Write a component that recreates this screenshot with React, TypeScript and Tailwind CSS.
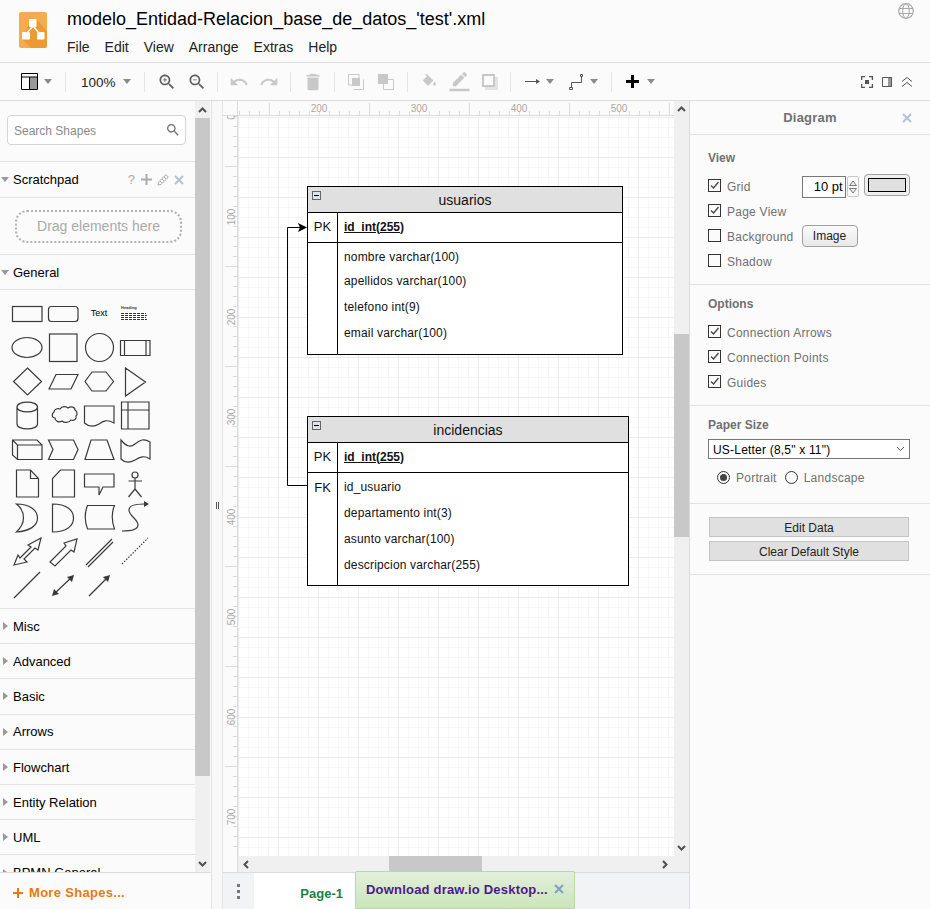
import React from 'react';

const font = "[font-family:'Liberation_Sans',Arial,sans-serif]";

const Caret = ({ className = '' }: { className?: string }) => (
  <svg width="8" height="5" viewBox="0 0 8 5" className={`shrink-0 ${className}`}>
    <path d="M0 0h8L4 5z" fill="#8a8a8a" />
  </svg>
);

const Sep = ({ className = '' }: { className?: string }) => <div className={`w-px h-[20px] bg-[#e4e5e8] shrink-0 ${className}`} />;

const Mat = ({ d, size = 20, fill = '#c8c8c8', className = '' }: { d: string; size?: number; fill?: string; className?: string }) => (
  <svg width={size} height={size} viewBox="0 0 24 24" className={`shrink-0 ${className}`}>
    <path d={d} fill={fill} />
  </svg>
);

const LENS = 'M15.5 14h-.79l-.28-.27C15.41 12.59 16 11.11 16 9.5 16 5.91 13.09 3 9.5 3S3 5.91 3 9.5 5.91 16 9.5 16c1.61 0 3.09-.59 4.23-1.57l.27.28v.79l5 4.99L20.49 19l-4.99-5zm-6 0C7.01 14 5 11.99 5 9.5S7.01 5 9.5 5 14 7.01 14 9.5 11.99 14 9.5 14z';

const Toolbar = () => (
  <div className="h-[38px] flex items-center border-b border-[#dadce0] shrink-0">
    <svg width="17" height="17" viewBox="0 0 17 17" className="ml-[21px] shrink-0">
      <path d="M9 4h7.5v12.5H9z" fill="#999" />
      <path d="M.5.5h16v16H.5zM.5 4h16M8.5 4v12.5" fill="none" stroke="#000" />
    </svg>
    <Caret className="ml-[6px]" />
    <Sep className="ml-[13px]" />
    <div className="ml-[15px] w-[35px] pt-[3px] text-[13.5px] text-[#222] whitespace-nowrap">100%</div>
    <Caret className="ml-[7px]" />
    <Sep className="ml-[13px]" />
    <Mat className="ml-[12px]" fill="#5f5f5f" d={LENS + 'M12 10h-2v2H9v-2H7V9h2V7h1v2h2v1z'} />
    <Mat className="ml-[10px]" fill="#5f5f5f" d={LENS + 'M7 9h5v1H7z'} />
    <Sep className="ml-[10px]" />
    <Mat className="ml-[11px]" d="M12.5 8c-2.65 0-5.05.99-6.9 2.6L2 7v9h9l-3.62-3.62c1.39-1.16 3.16-1.88 5.12-1.88 3.54 0 6.55 2.31 7.6 5.5l2.37-.78C21.08 11.03 17.15 8 12.5 8z" />
    <Mat className="ml-[10px]" d="M18.4 10.6C16.55 8.99 14.15 8 11.5 8c-4.65 0-8.58 3.03-9.96 7.22L3.9 16c1.05-3.19 4.05-5.5 7.6-5.5 1.95 0 3.73.72 5.12 1.88L13 16h9V7l-3.6 3.6z" />
    <Sep className="ml-[11px]" />
    <Mat className="ml-[11px]" size={22} d="M6 19c0 1.1.9 2 2 2h8c1.1 0 2-.9 2-2V7H6v12zM19 4h-3.5l-1-1h-5l-1 1H5v2h14V4z" />
    <Sep className="ml-[10px]" />
    <svg width="16" height="16" viewBox="0 0 16 16" className="ml-[13px] shrink-0">
      <path d="M4 11H.5V.5H11V4M5.500 15.500h10V5.500" fill="none" stroke="#c8c8c8" />
      <path d="M4 4h8v8H4z" fill="#c8c8c8" />
    </svg>
    <svg width="16" height="16" viewBox="0 0 16 16" className="ml-[14px] shrink-0">
      <path d="M0 0h10v10H0z" fill="#c8c8c8" />
      <path d="M5.500 5.500h10v10h-10z" fill="#fbfbfb" stroke="#c8c8c8" />
      <path d="M6 6h4v4H6z" fill="#c8c8c8" />
    </svg>
    <Sep className="ml-[13px]" />
    <svg width="17" height="18" viewBox="0 0 24 24" className="ml-[13px] shrink-0">
      <path fill="#c8c8c8" d="M16.56 8.94L7.620 0 6.210 1.410l2.380 2.380-5.150 5.150c-.59.59-.59 1.540 0 2.120l5.500 5.500c.29.29.68.44 1.060.44s.77-.15 1.060-.44l5.500-5.500c.59-.58.59-1.530 0-2.120zM19 11.500s-2 2.170-2 3.500c0 1.100.9 2 2 2s2-.9 2-2c0-1.330-2-3.500-2-3.500z" />
    </svg>
    <svg width="21" height="20" viewBox="0 0 24 24" className="ml-[11px] shrink-0">
      <path fill="#c8c8c8" d="M17.750 7L14 3.250l-10 10V17h3.750l10-10zm2.960-2.960c.39-.39.39-1.020 0-1.410L18.370.29a.996.996 0 0 0-1.410 0L15 2.250 18.750 6l1.960-1.960zM0 20h24v3H0z" />
    </svg>
    <svg width="16" height="16" viewBox="0 0 16 16" className="ml-[12px] shrink-0">
      <path d="M3 3h13v13H3z" fill="#e3e3e3" />
      <path d="M1 1h11v11H1z" fill="#fbfbfb" stroke="#c8c8c8" strokeWidth="2" />
    </svg>
    <Sep className="ml-[12px]" />
    <svg width="15" height="7" viewBox="0 0 15 7" className="ml-[14px] shrink-0">
      <path d="M0 3.500h12" stroke="#555" />
      <path d="M11 1l4 2.500L11 6z" fill="#555" />
    </svg>
    <Caret className="ml-[6px]" />
    <svg width="15" height="16" viewBox="0 0 15 16" className="ml-[15px] shrink-0">
      <path d="M2.500 13.500V8.500h10V2.500" fill="none" stroke="#555" />
      <path d="M.5 13.500h3v2h-3zM11.500.5h2v2h-2z" fill="#fff" stroke="#555" />
    </svg>
    <Caret className="ml-[6px]" />
    <Sep className="ml-[13px]" />
    <svg width="13" height="13" viewBox="0 0 13 13" className="ml-[14px] shrink-0">
      <path d="M5 0h3v5h5v3H8v5H5V8H0V5h5z" fill="#000" />
    </svg>
    <Caret className="ml-[8px]" />
    <svg width="12" height="12" viewBox="0 0 12 12" className="ml-auto shrink-0">
      <path d="M.5 4V.5H4M8 .5h3.500V4M.5 8v3.500H4M8 11.500h3.500V8" fill="none" stroke="#555" strokeWidth="1.500" />
      <path d="M4 4h4v4H4z" fill="#555" />
    </svg>
    <svg width="10" height="10" viewBox="0 0 10 10" className="ml-[9px] shrink-0">
      <path d="M6 0h4v10H6z" fill="#999" />
      <path d="M.5.5h9v9h-9z" fill="none" stroke="#555" />
    </svg>
    <svg width="10" height="10" viewBox="0 0 10 10" className="ml-[10px] mr-[18px] shrink-0">
      <path d="M0 4.500l5-4 5 4M0 9.500l5-4 5 4" fill="none" stroke="#555" />
    </svg>
  </div>
);

const Tri = () => (
  <svg width="8" height="5" viewBox="0 0 8 5" className="shrink-0 mr-[4px]">
    <path d="M0 0h8L4 5z" fill="#999" />
  </svg>
);

const TriRight = () => (
  <svg width="5" height="8" viewBox="0 0 5 8" className="shrink-0 mx-[3px] mr-[5px]">
    <path d="M0 0l5 4-5 4z" fill="#999" />
  </svg>
);

const Palette = () => (
  <svg width="170" height="318" viewBox="0 290 170 318" className="block" fill="none" stroke="#3a3a3a" strokeWidth="1.200">
    <rect x="12.500" y="306.500" width="29.500" height="15" />
    <rect x="48.500" y="306.500" width="29.500" height="15" rx="3" />
    <text x="99" y="316" fontSize="9" fill="#000" stroke="none" textAnchor="middle" fontFamily="Liberation Sans">Text</text>
    <text x="121" y="309" fontSize="4" fontWeight="bold" fill="#333" stroke="none" fontFamily="Liberation Sans">Heading</text>
    <path d="M121 313.500h25M121 315.500h26M121 317.500h25M121 319.500h26" stroke="#333" strokeWidth="1" strokeDasharray="3 1" />
    <ellipse cx="27" cy="347.500" rx="15" ry="10" />
    <rect x="49.500" y="334" width="27.500" height="27.500" />
    <circle cx="99.500" cy="347.500" r="14" />
    <path d="M120.500 340.500h29.500v15h-29.500zM124.500 340.500v15M146 340.500v15" />
    <path d="M27.500 368l14 13.500-14 13.500-14-13.500zM49 389l7-14.500h22l-7 14.500zM85 381.500l7-9.500h14l7.500 9.500-7.500 9.500H92zM125.500 368l20 14-20 14z" />
    <path d="M17 407v17c0 6.500 20.500 6.500 20.500 0v-17c0-6.500-20.500-6.500-20.500 0zM17 407c0 6.500 20.500 6.500 20.500 0" />
    <path d="M54 412c0-3 4-4 6-3 2-3 6-3 8-1 3-2 7-1 7 2 2 1 3 5 1 6 1 3-2 5-5 4-2 3-7 3-9 1-3 2-7 0-7-3-3 0-4-4-1-6z" />
    <path d="M84.500 406h29.500v17c-7-4-11-2-15 1-5 3-10 3-14.500-1z" />
    <path d="M121.500 402h27.500v27h-27.500zM128 402v27M121.500 410h27.500" />
    <g transform="translate(0 3)">
      <path d="M12.500 437h24.500l5 5v14.500H17.500l-5-4.500zM12.500 437l5 5v14.500M17.500 442H42" />
      <path d="M48.500 437h25l4.500 9.500-4.500 10h-25l4.500-10z" />
      <path d="M91 437h16l7 19.500H85z" />
      <path d="M121 437c5 6 9 8 14 4s9-6 15-2v17c-6-4-10-2-15 1s-10 3-14-1z" />
    </g>
    <path d="M16.500 470h14l8 8.500V497h-22zM30.500 470v8.500h8" />
    <path d="M60.500 470h14v27h-22v-18.500z" />
    <path d="M84.500 474h29.500v13h-11l-4 8v-8H84.500z" />
    <circle cx="135" cy="475" r="3" />
    <path d="M135 478v11M128.500 481h13.500M135 489l-6.500 8M135 489l6.500 8" />
    <path d="M16.500 504c13 0 21 6 21 14s-8 13-21 14c5-5 7-9 7-14s-2-10-7-14z" />
    <path d="M52.500 504c14 0 21 6 21 14s-7 14-21 14z" />
    <path d="M87.500 505.500h27c-3 7-3 15 0 23.500h-27c-3-8-3-16 0-23.500z" />
    <path d="M122 531c9 0 16-1 16-6 0-6-9-9-9-15 0-4 5-6 15-6" />
    <path d="M144 501l5 3-5 3z" fill="#3a3a3a" stroke="none" />
    <path d="M14 565l4-10 2 3 11-11-3-2 13-7-3 12-3-2-11 11 3 3z" />
    <path d="M50 562l16-16-2-3 13-4-3 13-3-2-16 16z" />
    <path d="M86 565l26-26M88 567l25-25" />
    <path d="M122 564l26-26" strokeDasharray="1.500 1.500" />
    <path d="M14 598l26-26" />
    <path d="M54 594l19-18" />
    <path d="M52 596l7-2-5-5zM74 575l-7 2 5 5z" fill="#3a3a3a" stroke="none" />
    <path d="M89 596l19-19" />
    <path d="M110 575l-7 2 5 5z" fill="#3a3a3a" stroke="none" />
  </svg>
);

const sections = ['Misc', 'Advanced', 'Basic', 'Arrows', 'Flowchart', 'Entity Relation', 'UML'];

const Sidebar = () => (
  <div className="w-[212px] shrink-0 flex flex-col border-r border-[#e2e2e2]">
    <div className="flex-1 flex min-h-0">
      <div className="w-[195px] shrink-0 overflow-hidden flex flex-col">
        <div className="h-[61px] shrink-0 border-b border-[#e2e2e2] pl-[7px] pt-[14px]">
          <div className="w-[179px] h-[30px] rounded-[4px] border border-[#d4d4d4] bg-white flex items-center pl-[6px] pr-[4px]">
            <span className="text-[12px] pt-px text-[#8a8a8a]">Search Shapes</span>
            <svg width="16" height="16" viewBox="0 0 24 24" className="ml-auto">
              <path d={LENS} fill="#707070" />
            </svg>
          </div>
        </div>
        <div className="h-[36px] shrink-0 border-b border-[#e2e2e2] flex items-center pl-px pr-[11px]">
          <Tri />
          <span className="text-[13px] text-black">Scratchpad</span>
          <span className="ml-auto text-[13px] text-[#aaa]">?</span>
          <svg width="11" height="11" viewBox="0 0 11 11" className="ml-[6px]">
            <path d="M4.500 0h2v4.500H11v2H6.500V11h-2V6.500H0v-2h4.500z" fill="#aaa" />
          </svg>
          <svg width="12" height="12" viewBox="0 0 12 12" className="ml-[5px]">
            <path d="M1 11l.5-3L9 .7l2.300 2.300L4 10.500z" fill="none" stroke="#aaa" />
            <path d="M3 7l2 2M5 5l2 2M7 3l2 2" stroke="#aaa" />
          </svg>
          <svg width="10" height="10" viewBox="0 0 10 10" className="ml-[5px]">
            <path d="M1 1l8 8M9 1l-8 8" stroke="#b4c2d6" strokeWidth="2" />
          </svg>
        </div>
        <div className="h-[57px] shrink-0 border-b border-[#e2e2e2] flex items-center justify-center pl-[2px]">
          <div className="w-[167px] h-[33px] rounded-[12px] border-2 border-dotted border-[#b0b0b0] flex items-center justify-center text-[14px] text-[#aaaaaa]">
            Drag elements here
          </div>
        </div>
        <div className="h-[35px] shrink-0 border-b border-[#e2e2e2] flex items-center pl-px">
          <Tri />
          <span className="text-[13px] pt-px text-black">General</span>
        </div>
        <div className="h-[319px] shrink-0 border-b border-[#e2e2e2]">
          <Palette />
        </div>
        {sections.map((name) => (
          <div key={name} className="h-[35.2px] shrink-0 border-b border-[#e2e2e2] flex items-center">
            <TriRight />
            <span className="text-[13px] pt-px text-black whitespace-nowrap">{name}</span>
          </div>
        ))}
        <div className="h-[35px] shrink-0 flex items-center">
          <TriRight />
          <span className="text-[13px] text-black whitespace-nowrap">BPMN General</span>
        </div>
      </div>
      <div className="w-[15px] shrink-0 bg-[#f0f0f0] flex flex-col">
        <div className="h-[17px] shrink-0 flex items-center justify-center">
          <svg width="9" height="6" viewBox="0 0 9 6"><path d="M1 5l3.500-3.500L8 5" fill="none" stroke="#505050" strokeWidth="2" /></svg>
        </div>
        <div className="h-[658px] bg-[#c8c8c8] shrink-0" />
        <div className="mt-auto h-[17px] flex items-center justify-center">
          <svg width="9" height="6" viewBox="0 0 9 6"><path d="M1 1l3.500 3.500L8 1" fill="none" stroke="#505050" strokeWidth="2" /></svg>
        </div>
      </div>
    </div>
    <div className="h-[37px] shrink-0 border-t border-[#dadce0] flex items-center pl-[13px] pt-[4px]">
      <svg width="10" height="10" viewBox="0 0 10 10" className="mr-[6px]">
        <path d="M4 0h2v4h4v2H6v4H4V6H0V4h4z" fill="#e87a0c" />
      </svg>
      <span className="text-[13px] font-bold text-[#e87a0c] tracking-[0.3px]">More Shapes...</span>
    </div>
  </div>
);

const HRuler = () => {
  const ticks = Array.from({ length: 44 }, (_, i) => i * 10 + 1.5);
  return (
    <svg width="436" height="15" className="block flex-1">
      {ticks.map((x) => (
        <path key={x} d={`M${x} ${(x - 31.5) % 100 === 0 ? 2 : 10}V15`} stroke="#dcdcdc" />
      ))}
      {[200, 300, 400, 500].map((v, i) => (
        <text key={v} x={81 + i * 100} y="11" fontSize="10" fill="#a8a8a8" textAnchor="middle" fontFamily="Liberation Sans">{v}</text>
      ))}
    </svg>
  );
};

const VRuler = () => {
  const ticks = Array.from({ length: 76 }, (_, i) => i * 10 + 0.5);
  return (
    <svg width="15" height="757" className="block shrink-0 bg-[#fbfbfb]">
      <path d="M14.500 0V757" stroke="#dcdcdc" />
      {ticks.map((y) => (
        <path key={y} d={`M${(y - 50.5) % 100 === 0 ? 2 : 10} ${y}H15`} stroke="#dcdcdc" />
      ))}
      {[0, 100, 200, 300, 400, 500, 600, 700].map((v, i) => (
        <text key={v} transform={`translate(12 ${1 + i * 100}) rotate(-90)`} fontSize="10" fill="#a8a8a8" textAnchor="middle" fontFamily="Liberation Sans">{v}</text>
      ))}
    </svg>
  );
};

const Collapse = () => (
  <div className="absolute left-[4px] top-[4px] w-[9px] h-[9px] bg-[#dde3ea] border border-[#666] flex items-center justify-center">
    <div className="w-[5px] h-px bg-black" />
  </div>
);

type EntityProps = {
  title: string;
  className: string;
  fk?: string;
  rows: string[];
  firstRow: string;
};

const Entity = ({ title, className, fk, rows, firstRow }: EntityProps) => (
  <div className={`absolute border border-black bg-white flex flex-col text-[12px] tracking-[0.17px] text-[#111] ${className}`}>
    <div className="relative h-[26px] pt-[2px] shrink-0 bg-[#e0e0e0] border-b border-black flex items-center justify-center text-[14px] tracking-normal">
      <Collapse />
      {title}
    </div>
    <div className="h-[30px] pb-[2px] shrink-0 border-b border-black flex">
      <div className="w-[30px] border-r border-black -mb-[2px] pb-[2px] flex items-center justify-center text-[13px] tracking-normal">PK</div>
      <div className="pl-[6px] flex items-center font-bold underline tracking-normal">id_int(255)</div>
    </div>
    <div className="flex-1 flex">
      <div className="w-[30px] shrink-0 border-r border-black">
        {fk && <div className="h-[29px] flex items-center justify-center text-[13px] tracking-normal">{fk}</div>}
      </div>
      <div className="flex-1 pl-[6px] pt-[1px]">
        {rows.map((r, i) => (
          <div key={r} className={`flex items-center ${i === 0 ? firstRow : 'h-[26px]'}`}>{r}</div>
        ))}
      </div>
    </div>
  </div>
);

const Canvas = () => (
  <div className="flex-1 flex min-w-0">
    <div className="w-[11px] shrink-0 bg-[#f8f8f8] border-r border-[#e6e6e6] flex items-center justify-center pl-px">
      <div className="w-[3px] h-[7px] border-x border-[#555]" />
    </div>
    <div className="flex-1 flex flex-col min-w-0">
      <div className="flex-1 flex min-h-0">
        <div className="flex-1 flex flex-col min-w-0">
          <div className="h-[15px] shrink-0 flex bg-[#fbfbfb] border-b border-[#dcdcdc]">
            <div className="w-[15px] shrink-0 border-r border-[#dcdcdc]" />
            <HRuler />
          </div>
          <div className="flex-1 flex min-h-0">
            <VRuler />
            <div className="relative flex-1 bg-white bg-[linear-gradient(#ececec_1px,transparent_1px),linear-gradient(90deg,#ececec_1px,transparent_1px),linear-gradient(#f7f7f7_1px,transparent_1px),linear-gradient(90deg,#f7f7f7_1px,transparent_1px)] bg-[size:40px_40px,40px_40px,10px_10px,10px_10px] bg-[position:0_1px,0_0,0_1px,0_0]">
              <svg className="absolute left-0 top-0" width="436" height="741" viewBox="238 116 436 741">
                <path d="M307 485.500H287.500V227.500H300" fill="none" stroke="#000" />
                <path d="M307 227.500l-9-4.500 2 4.500-2 4.500z" fill="#000" />
              </svg>
              <Entity
                title="usuarios"
                className="left-[69px] top-[70px] w-[316px] h-[169px]"
                rows={['nombre varchar(100)', 'apellidos varchar(100)', 'telefono int(9)', 'email varchar(100)']}
                firstRow="h-[24px] pt-[2px]"
              />
              <Entity
                title="incidencias"
                className="left-[69px] top-[300px] w-[322px] h-[170px]"
                fk="FK"
                rows={['id_usuario', 'departamento int(3)', 'asunto varchar(100)', 'descripcion varchar(255)']}
                firstRow="h-[26px]"
              />
            </div>
          </div>
        </div>
        <div className="w-[15px] shrink-0 bg-[#f0f0f0] flex flex-col">
          <div className="h-[16px] shrink-0 flex items-center justify-center">
            <svg width="9" height="6" viewBox="0 0 9 6"><path d="M1 5l3.500-3.500L8 5" fill="none" stroke="#505050" strokeWidth="2" /></svg>
          </div>
          <div className="h-[217px] shrink-0" />
          <div className="h-[203px] shrink-0 bg-[#c8c8c8]" />
          <div className="mt-auto h-[16px] flex items-center justify-center">
            <svg width="9" height="6" viewBox="0 0 9 6"><path d="M1 1l3.500 3.500L8 1" fill="none" stroke="#505050" strokeWidth="2" /></svg>
          </div>
        </div>
      </div>
      <div className="h-[16px] shrink-0 flex bg-[#f0f0f0]">
        <div className="w-[15px] shrink-0 bg-[#fbfbfb] border-r border-[#dcdcdc]" />
        <div className="w-[16px] shrink-0 flex items-center justify-center">
          <svg width="6" height="9" viewBox="0 0 6 9"><path d="M5 1L1.500 4.500 5 8" fill="none" stroke="#505050" strokeWidth="2" /></svg>
        </div>
        <div className="w-[135px] shrink-0" />
        <div className="w-[93px] shrink-0 bg-[#c8c8c8]" />
        <div className="ml-auto w-[31px] shrink-0 flex items-center pl-[4px]">
          <svg width="6" height="9" viewBox="0 0 6 9"><path d="M1 1l3.500 3.500L1 8" fill="none" stroke="#505050" strokeWidth="2" /></svg>
        </div>
      </div>
      <div className="h-[37px] shrink-0 flex bg-[#f1f3f7] border-t border-[#dadce0]">
        <div className="w-[31px] flex flex-col items-center justify-center gap-[3px]">
          <div className="w-[3px] h-[3px] bg-[#777]" />
          <div className="w-[3px] h-[3px] bg-[#777]" />
          <div className="w-[3px] h-[3px] bg-[#777]" />
        </div>
        <div className="w-[101px] bg-white flex items-center justify-end pr-[12px] pt-[5px] text-[13px] font-bold text-[#1b8049]">Page-1</div>
      </div>
    </div>
  </div>
);

const Check = ({ on }: { on?: boolean }) => (
  <div className="w-[13px] h-[13px] mb-[3px] border border-[#333] bg-[#fbfbfb] shrink-0 flex items-center justify-center">
    {on && (
      <svg width="11" height="11" viewBox="0 0 11 11">
        <path d="M2 5.500l2.500 2.500L9.500 2" fill="none" stroke="#444" strokeWidth="1.300" />
      </svg>
    )}
  </div>
);

const OptRow = ({ label, on, children }: { label: string; on?: boolean; children?: React.ReactNode }) => (
  <div className="h-[25px] flex items-center">
    <Check on={on} />
    <span className="ml-[6px] text-[12px] text-[#707070] tracking-[0.25px]">{label}</span>
    {children}
  </div>
);

const Panel = () => (
  <div className="w-[241px] shrink-0 flex flex-col border-l border-[#dadce0]">
    <div className="h-[34px] shrink-0 border-b border-[#e2e2e2] relative flex items-center justify-center text-[13px] font-bold text-[#707070] tracking-[0.2px]">
      Diagram
      <svg width="10" height="10" viewBox="0 0 10 10" className="absolute right-[18px] top-[12px]">
        <path d="M1 1l8 8M9 1l-8 8" stroke="#b4c2d6" strokeWidth="2" />
      </svg>
    </div>
    <div className="h-[150px] shrink-0 border-b border-[#e2e2e2] pl-[18px] pt-[16px]">
      <div className="text-[12px] font-bold text-[#707070] h-[15px] leading-[15px] mb-[8px]">View</div>
      <OptRow label="Grid" on>
        <div className="ml-[51px] w-[44px] h-[22px] border border-[#777] bg-white flex items-center justify-end pr-[2px] text-[13px] text-black">10 pt</div>
        <div className="ml-px w-[12px] h-[21px] border border-[#c8c8c8] rounded-[2px] flex flex-col items-center justify-center gap-[2px]">
          <svg width="8" height="6" viewBox="0 0 8 6"><path d="M.5 5.500L4 1l3.500 4.500z" fill="#eee" stroke="#777" /></svg>
          <svg width="8" height="6" viewBox="0 0 8 6"><path d="M.5.5L4 5l3.500-4.500z" fill="#eee" stroke="#777" /></svg>
        </div>
        <div className="ml-[5px] mb-[4px] w-[46px] h-[22px] rounded-[4px] border border-[#a0a0a0] bg-[#f0f0f0] flex items-center justify-center">
          <div className="w-[38px] h-[14px] bg-[#e0e0e0] border border-black" />
        </div>
      </OptRow>
      <OptRow label="Page View" on />
      <OptRow label="Background">
        <div className="ml-[8px] mb-[2px] w-[56px] h-[22px] rounded-[4px] border border-[#a0a0a0] bg-[linear-gradient(#fafafa,#e8e8e8)] flex items-center justify-center text-[12px] text-[#222]">Image</div>
      </OptRow>
      <OptRow label="Shadow" />
    </div>
    <div className="h-[121px] shrink-0 border-b border-[#e2e2e2] pl-[18px] pt-[12px]">
      <div className="text-[12px] font-bold text-[#707070] h-[15px] leading-[15px] mb-[8px]">Options</div>
      <OptRow label="Connection Arrows" on />
      <OptRow label="Connection Points" on />
      <OptRow label="Guides" on />
    </div>
    <div className="h-[98px] shrink-0 border-b border-[#e2e2e2] pl-[18px] pt-[12px]">
      <div className="text-[12px] font-bold text-[#707070] h-[15px] leading-[15px] mb-[6px]">Paper Size</div>
      <div className="w-[202px] h-[20px] border border-[#777] bg-white flex items-center pl-[4px] pr-[4px] text-[12px] text-black tracking-[0.2px]">
        <span className="pt-px">US-Letter (8,5" x 11")</span>
        <svg width="9" height="6" viewBox="0 0 9 6" className="ml-auto"><path d="M1 1l3.500 3.500L8 1" fill="none" stroke="#555" /></svg>
      </div>
      <div className="flex items-center pl-[9px] mt-[10px] text-[12px] text-[#707070] tracking-[0.25px]">
        <div className="w-[13px] h-[13px] mb-[2px] rounded-full border border-[#333] flex items-center justify-center">
          <div className="w-[7px] h-[7px] rounded-full bg-[#444]" />
        </div>
        <span className="ml-[6px]">Portrait</span>
        <div className="ml-[8px] mb-[2px] w-[13px] h-[13px] rounded-full border border-[#333]" />
        <span className="ml-[6px]">Landscape</span>
      </div>
    </div>
    <div className="h-[71px] shrink-0 border-b border-[#e2e2e2] pl-[19px] pt-[13px] flex flex-col gap-[4px]">
      <div className="w-[200px] h-[20px] pt-px bg-[#e0e0e0] border border-[#c4c4c4] flex items-center justify-center text-[12px] text-[#222]">Edit Data</div>
      <div className="w-[200px] h-[20px] pt-px bg-[#e0e0e0] border border-[#c4c4c4] flex items-center justify-center text-[12px] text-[#222]">Clear Default Style</div>
    </div>
  </div>
);

export default function App() {
  return (
    <div className={`relative w-[930px] h-[909px] overflow-hidden bg-[#fbfbfb] flex flex-col ${font}`}>
      <div className="h-[63px] shrink-0 border-b border-[#dadce0] relative">
        <svg width="28" height="36" viewBox="0 0 28 36" className="absolute left-[19px] top-[12px]">
          <rect width="28" height="36" rx="2" fill="#f5ab50" />
          <path d="M12 7h5l11 12v15a2 2 0 0 1-2 2H12L3 27z" fill="#ee9a34" />
          <path d="M14 14L7 22M14 14l7 8" stroke="#fff" strokeWidth="1.500" />
          <rect x="10" y="7" width="7.500" height="8" rx="1" fill="#fff" />
          <rect x="3" y="20" width="8" height="7.500" rx="1" fill="#fff" />
          <rect x="18" y="20" width="7.500" height="7.500" rx="1" fill="#fff" />
        </svg>
        <div className="absolute left-[67px] top-[9px] text-[18px] leading-[21px] text-black whitespace-nowrap">modelo_Entidad-Relacion_base_de_datos_'test'.xml</div>
        <div className="absolute left-[67px] top-[39px] flex text-[14px] leading-[16px] text-[#222]">
          <span>File</span>
          <span className="ml-[15px]">Edit</span>
          <span className="ml-[15px]">View</span>
          <span className="ml-[15px]">Arrange</span>
          <span className="ml-[15px]">Extras</span>
          <span className="ml-[15px]">Help</span>
        </div>
        <svg width="16" height="16" viewBox="0 0 16 16" className="absolute left-[898px] top-[3px]" fill="none" stroke="#a8a8a8">
          <circle cx="8" cy="8" r="7.300" strokeWidth="1.200" />
          <ellipse cx="8" cy="8" rx="3.300" ry="7.300" />
          <path d="M1 5.500h14M1 10.500h14" />
        </svg>
      </div>
      <Toolbar />
      <div className="flex-1 flex min-h-0">
        <Sidebar />
        <Canvas />
        <Panel />
      </div>
      <div className="absolute left-[355px] top-[871px] w-[220px] h-[38px] rounded-t-[2px] border border-[#b5dba0] bg-[linear-gradient(#e2efda,#cbe6bb)] flex items-center pl-[10px] text-[13px] font-bold tracking-[0.2px] text-[#4b1a8a] whitespace-nowrap">
        Download draw.io Desktop...
        <svg width="10" height="10" viewBox="0 0 10 10" className="ml-[6px] mb-[2px]">
          <path d="M1 1l8 8M9 1l-8 8" stroke="#7f9fc4" strokeWidth="2" />
        </svg>
      </div>
    </div>
  );
}
